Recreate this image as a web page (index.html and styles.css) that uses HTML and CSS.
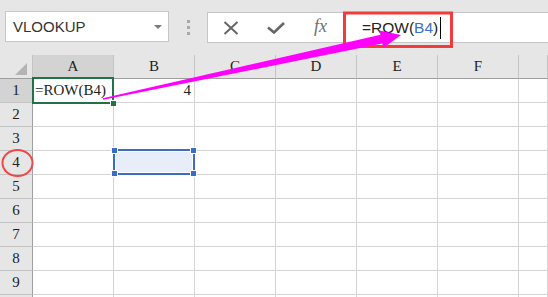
FILE: index.html
```html
<!DOCTYPE html>
<html lang="en">
<head>
    <meta charset="UTF-8">
    <title>ROW formula</title>
    <link rel="stylesheet" href="styles.css">
</head>
<body>
    <div class="toolbar">
        <div class="namebox">
            <span class="name">VLOOKUP</span>
            <span class="drop"></span>
        </div>
        <div class="grip"><i></i><i></i><i></i></div>
        <div class="formulabar">
            <div class="btns">
                <span class="btn">
                    <svg width="16" height="14" viewBox="0 0 16 14"><path d="M1.5 1 L14.5 13 M14.5 1 L1.5 13" stroke="#666" stroke-width="2" fill="none"/></svg>
                </span>
                <span class="btn">
                    <svg width="18" height="12" viewBox="0 0 18 12"><path d="M1 5.5 L7 10.5 L17 1" stroke="#666" stroke-width="2.6" fill="none"/></svg>
                </span>
                <span class="btn fx">fx</span>
            </div>
            <div class="input">=ROW(<span class="ref">B4</span>)<span class="caret"></span></div>
        </div>
    </div>

    <div class="sheet">
        <div class="row head">
            <div class="corner"><span class="tri"></span></div>
            <div class="ch active">A</div><div class="ch">B</div><div class="ch">C</div><div class="ch">D</div><div class="ch">E</div><div class="ch">F</div><div class="ch"></div>
        </div>
        <div class="row">
            <div class="rh active">1</div>
            <div class="c txt">=ROW(B4)</div><div class="c num">4</div><div class="c"></div><div class="c"></div><div class="c"></div><div class="c"></div><div class="c"></div>
        </div>
        <div class="row">
            <div class="rh">2</div>
            <div class="c"></div><div class="c"></div><div class="c"></div><div class="c"></div><div class="c"></div><div class="c"></div><div class="c"></div>
        </div>
        <div class="row">
            <div class="rh">3</div>
            <div class="c"></div><div class="c"></div><div class="c"></div><div class="c"></div><div class="c"></div><div class="c"></div><div class="c"></div>
        </div>
        <div class="row">
            <div class="rh">4</div>
            <div class="c"></div><div class="c"></div><div class="c"></div><div class="c"></div><div class="c"></div><div class="c"></div><div class="c"></div>
        </div>
        <div class="row">
            <div class="rh">5</div>
            <div class="c"></div><div class="c"></div><div class="c"></div><div class="c"></div><div class="c"></div><div class="c"></div><div class="c"></div>
        </div>
        <div class="row">
            <div class="rh">6</div>
            <div class="c"></div><div class="c"></div><div class="c"></div><div class="c"></div><div class="c"></div><div class="c"></div><div class="c"></div>
        </div>
        <div class="row">
            <div class="rh">7</div>
            <div class="c"></div><div class="c"></div><div class="c"></div><div class="c"></div><div class="c"></div><div class="c"></div><div class="c"></div>
        </div>
        <div class="row">
            <div class="rh">8</div>
            <div class="c"></div><div class="c"></div><div class="c"></div><div class="c"></div><div class="c"></div><div class="c"></div><div class="c"></div>
        </div>
        <div class="row">
            <div class="rh">9</div>
            <div class="c"></div><div class="c"></div><div class="c"></div><div class="c"></div><div class="c"></div><div class="c"></div><div class="c"></div>
        </div>
        <div class="row">
            <div class="rh"></div>
            <div class="c"></div><div class="c"></div><div class="c"></div><div class="c"></div><div class="c"></div><div class="c"></div><div class="c"></div>
        </div>

        <!-- active cell A1 -->
        <div class="sel-a1"><span class="handle"></span></div>
        <!-- selected range B4 -->
        <div class="sel-b4">
            <span class="h tl"></span><span class="h tr"></span><span class="h bl"></span><span class="h br"></span>
        </div>
    </div>

    <!-- annotations -->
    <svg class="marks" width="548" height="297" viewBox="0 0 548 297">
        <rect x="344.5" y="13" width="107" height="33.5" fill="none" stroke="#f23c3c" stroke-width="3"/>
        <ellipse cx="17.5" cy="163" rx="15" ry="13" fill="none" stroke="#f04848" stroke-width="2"/>
        <polygon points="102.8,98.2 380.5,34.8 379.5,30.4 401,35 383.3,48 382.3,43.6 103.2,99.8" fill="#f0f"/>
    </svg>
</body>
</html>
```

FILE: styles.css
```css
html, body {
    margin: 0;
    padding: 0;
}
body {
    position: relative;
    width: 548px;
    height: 297px;
    overflow: hidden;
    background: #e6e6e6;
    font-family: "Liberation Sans", Arial, sans-serif;
}

/* formula toolbar */
.toolbar {
    display: flex;
    height: 55px;
    padding: 11px 0 0 5px;
    box-sizing: border-box;
}
.namebox {
    display: flex;
    align-items: center;
    justify-content: space-between;
    width: 164px;
    height: 31px;
    box-sizing: border-box;
    background: #fff;
    border: 1px solid #c6c6c6;
    padding: 0 6px 0 7px;
}
.name {
    font-size: 15px;
    color: #333;
}
.drop {
    width: 0;
    height: 0;
    border-left: 4px solid transparent;
    border-right: 4px solid transparent;
    border-top: 4px solid #7a7a7a;
}
.grip {
    width: 38px;
    display: flex;
    flex-direction: column;
    align-items: center;
    gap: 3px;
    padding-top: 9px;
}
.grip i {
    display: block;
    width: 3px;
    height: 3px;
    background: #a8a8a8;
}
.formulabar {
    flex: 1;
    display: flex;
    height: 31px;
    margin-top: 1px;
    box-sizing: border-box;
    background: #fff;
    border: 1px solid #c6c6c6;
    border-right: none;
}
.btns {
    display: flex;
    width: 136px;
}
.btn {
    width: 45px;
    display: flex;
    align-items: center;
    justify-content: center;
}
.fx {
    font-family: "Liberation Serif", serif;
    font-style: italic;
    font-size: 18px;
    color: #6f6f6f;
    padding-bottom: 2px;
}
.input {
    flex: 1;
    display: flex;
    align-items: center;
    padding-left: 17px;
    border-left: 1px solid #d0d0d0;
    font-size: 15.5px;
    color: #222;
}
.ref {
    color: #3a6fc4;
}
.caret {
    display: inline-block;
    width: 1px;
    height: 22px;
    margin-left: 2px;
    background: #000;
}

/* worksheet */
.sheet {
    position: relative;
    font-family: "Liberation Serif", serif;
    font-size: 15px;
    color: #222;
}
.row {
    display: grid;
    grid-template-columns: 33px repeat(6, 81px) 1fr;
    height: 24px;
}
.row > div {
    box-sizing: border-box;
    border-right: 1px solid #d4d4d4;
    border-bottom: 1px solid #d4d4d4;
    background: #fff;
    line-height: 23px;
    white-space: nowrap;
}
.row.head > div {
    background: #e6e6e6;
    border-right-color: #c4c4c4;
    border-bottom-color: #9e9e9e;
    text-align: center;
}
.row.head > .active {
    background: #d3d3d3;
}
.corner {
    position: relative;
}
.tri {
    position: absolute;
    right: 5px;
    bottom: 3px;
    width: 0;
    height: 0;
    border-left: 12px solid transparent;
    border-bottom: 12px solid #b4b4b4;
}
.row > .rh {
    background: #e6e6e6;
    border-right-color: #9e9e9e;
    border-bottom-color: #c4c4c4;
    text-align: center;
}
.row > .rh.active {
    background: #d3d3d3;
}
.txt {
    padding-left: 2px;
}
.num {
    text-align: right;
    padding-right: 3px;
}

.sel-a1 {
    position: absolute;
    left: 32px;
    top: 22px;
    width: 82px;
    height: 27px;
    box-sizing: border-box;
    border: 2px solid #217346;
}
.sel-a1 .handle {
    position: absolute;
    right: -4px;
    bottom: -4px;
    width: 5px;
    height: 5px;
    background: #217346;
    border-left: 1px solid #fff;
    border-top: 1px solid #fff;
}
.sel-b4 {
    position: absolute;
    left: 113px;
    top: 94px;
    width: 82px;
    height: 26px;
    box-sizing: border-box;
    border: 2px solid #3b6cc9;
    box-shadow: inset 0 0 0 1px #fff;
    background: #e8eef9;
}
.sel-b4 .h {
    position: absolute;
    width: 5px;
    height: 5px;
    background: #3b6cc9;
    outline: 1px solid #fff;
}
.h.tl { left: -3px; top: -3px; }
.h.tr { right: -3px; top: -3px; }
.h.bl { left: -3px; bottom: -3px; }
.h.br { right: -3px; bottom: -3px; }

.marks {
    position: absolute;
    left: 0;
    top: 0;
    pointer-events: none;
}
```
